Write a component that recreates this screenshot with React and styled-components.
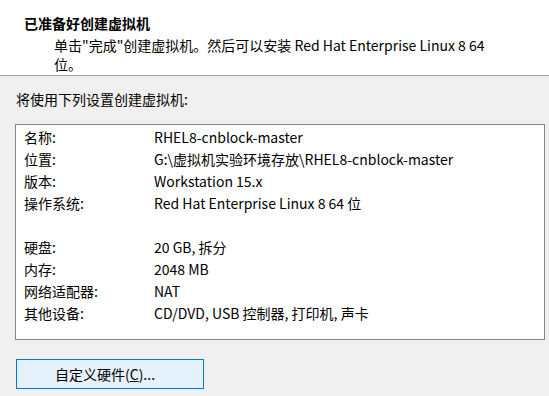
import React from 'react'
import styled, { createGlobalStyle } from 'styled-components'

const GlobalStyle = createGlobalStyle`
  html, body {
    margin: 0;
    padding: 0;
    background: #f0f0f0;
    font-family: "Noto Sans CJK SC", "Noto Sans", sans-serif;
    font-size: 14px;
    color: #000;
  }
`

const Wizard = styled.div`
  width: 549px;
  height: 396px;
  overflow: hidden;
  background: #f0f0f0;
`

const Header = styled.div`
  background: #fff;
  height: 76px;
  box-sizing: border-box;
  border-bottom: 1px solid #a0a0a0;
  padding: 13px 0 0 24px;
`

const Title = styled.h1`
  margin: 0;
  font-size: 14px;
  font-weight: bold;
  line-height: 20px;
`

const Subtitle = styled.p`
  margin: 3px 0 0 30px;
  width: 440px;
  line-height: 19px;
`

const Body = styled.div`
  padding: 13px 5px 0 15px;
`

const Intro = styled.div`
  padding-left: 1px;
  line-height: 20px;
`

const SummaryBox = styled.div`
  margin-top: 15px;
  width: 530px;
  height: 216px;
  box-sizing: border-box;
  border: 1px solid #828790;
  background: #fff;
  padding: 1px 0 0 8px;
`

const Row = styled.div`
  display: grid;
  grid-template-columns: 130px 1fr;
  height: 22px;
  line-height: 22px;
  white-space: nowrap;
`

const Spacer = styled.div`
  height: 22px;
`

const CustomButton = styled.button`
  margin: 19px 0 0 1px;
  width: 188px;
  height: 30px;
  box-sizing: border-box;
  border: 1px solid #0078d7;
  background: #e5f1fb;
  font-family: inherit;
  font-size: 14px;
  color: #000;
  padding: 0 10px 0 0;
  u {
    text-decoration: underline;
  }
`

const general = [
  ['名称:', 'RHEL8-cnblock-master'],
  ['位置:', 'G:\\虚拟机实验环境存放\\RHEL8-cnblock-master'],
  ['版本:', 'Workstation 15.x'],
  ['操作系统:', 'Red Hat Enterprise Linux 8 64 位'],
]

const hardware = [
  ['硬盘:', '20 GB, 拆分'],
  ['内存:', '2048 MB'],
  ['网络适配器:', 'NAT'],
  ['其他设备:', 'CD/DVD, USB 控制器, 打印机, 声卡'],
]

export default function App() {
  return (
    <Wizard>
      <GlobalStyle />
      <Header>
        <Title>已准备好创建虚拟机</Title>
        <Subtitle>单击"完成"创建虚拟机。然后可以安装 Red Hat Enterprise Linux 8 64 位。</Subtitle>
      </Header>
      <Body>
        <Intro>将使用下列设置创建虚拟机:</Intro>
        <SummaryBox>
          {general.map(([k, v]) => (
            <Row key={k}><span>{k}</span><span>{v}</span></Row>
          ))}
          <Spacer />
          {hardware.map(([k, v]) => (
            <Row key={k}><span>{k}</span><span>{v}</span></Row>
          ))}
        </SummaryBox>
        <CustomButton>自定义硬件(<u>C</u>)...</CustomButton>
      </Body>
    </Wizard>
  )
}
